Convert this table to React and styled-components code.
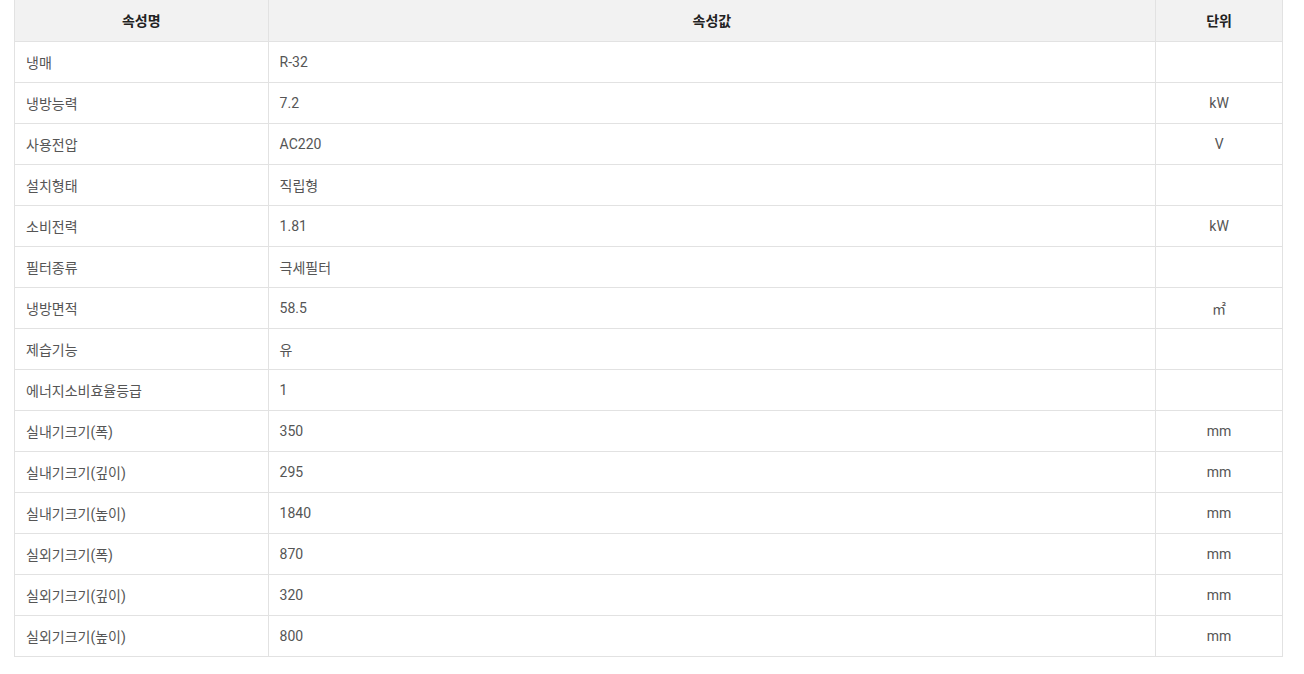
import styled, { createGlobalStyle } from "styled-components";

const GlobalStyle = createGlobalStyle`
  body {
    margin: 0;
    background: #fff;
    font-family: Roboto, "Noto Sans CJK KR", sans-serif;
  }
`;

const Wrapper = styled.div`
  padding: 0 21px 0 14px;
`;

const Table = styled.table`
  width: 100%;
  border-collapse: collapse;
  table-layout: fixed;
  font-size: 14px;
  color: #555;
`;

const Th = styled.th`
  height: 41px;
  padding: 0;
  background: #f2f2f2;
  border: 1px solid #e2e2e2;
  border-top: none;
  color: #222;
  font-weight: 700;
  text-align: center;
  box-sizing: border-box;
`;

const Td = styled.td`
  height: 41px;
  padding: 0 0 0 11px;
  border: 1px solid #e2e2e2;
  text-align: ${(props) => (props.$center ? "center" : "left")};
  box-sizing: border-box;
  ${(props) => props.$center && "padding: 0;"}
`;

const rows = [
  ["냉매", "R-32", ""],
  ["냉방능력", "7.2", "kW"],
  ["사용전압", "AC220", "V"],
  ["설치형태", "직립형", ""],
  ["소비전력", "1.81", "kW"],
  ["필터종류", "극세필터", ""],
  ["냉방면적", "58.5", "㎡"],
  ["제습기능", "유", ""],
  ["에너지소비효율등급", "1", ""],
  ["실내기크기(폭)", "350", "mm"],
  ["실내기크기(깊이)", "295", "mm"],
  ["실내기크기(높이)", "1840", "mm"],
  ["실외기크기(폭)", "870", "mm"],
  ["실외기크기(깊이)", "320", "mm"],
  ["실외기크기(높이)", "800", "mm"],
];

const App = () => (
  <Wrapper>
    <GlobalStyle />
    <Table>
      <colgroup>
        <col style={{ width: "20%" }} />
        <col style={{ width: "70%" }} />
        <col style={{ width: "10%" }} />
      </colgroup>
      <thead>
        <tr>
          <Th>속성명</Th>
          <Th>속성값</Th>
          <Th>단위</Th>
        </tr>
      </thead>
      <tbody>
        {rows.map(([name, value, unit]) => (
          <tr key={name}>
            <Td>{name}</Td>
            <Td>{value}</Td>
            <Td $center>{unit}</Td>
          </tr>
        ))}
      </tbody>
    </Table>
  </Wrapper>
);

export default App;
